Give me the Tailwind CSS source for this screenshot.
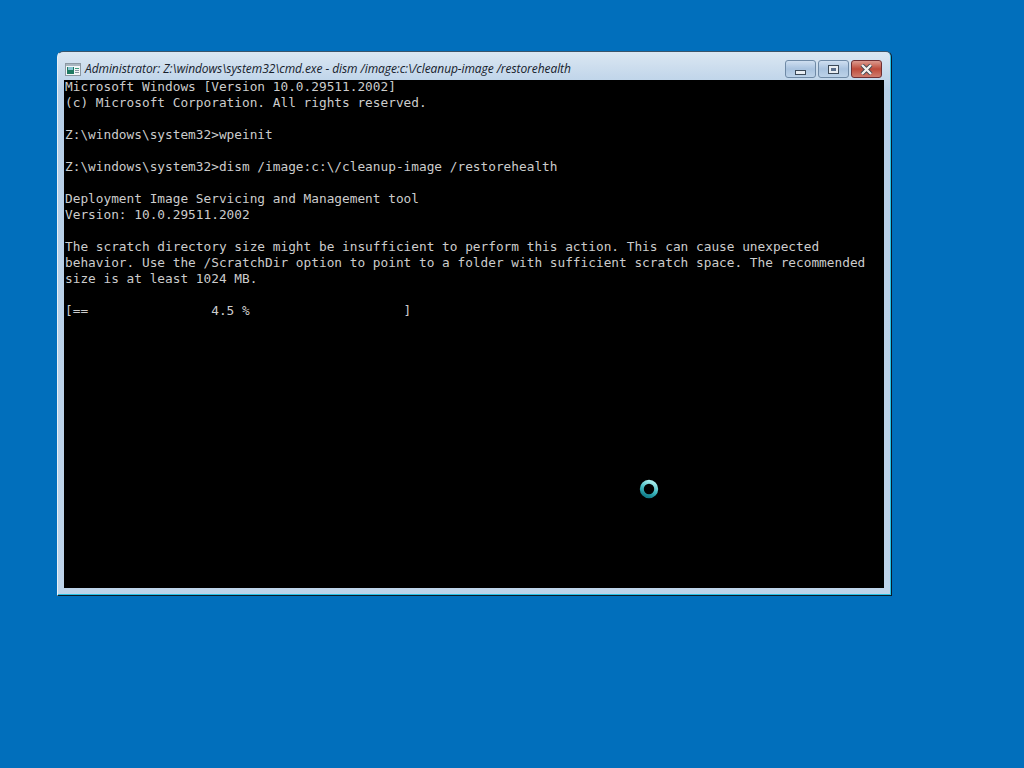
<html lang="en">
<head>
    <meta charset="UTF-8">
    <title>Administrator: cmd.exe</title>
    <script src="https://cdn.jsdelivr.net/npm/@tailwindcss/browser@4"></script>
</head>
<body class="bg-[#016fbc] w-[1024px] h-[768px] overflow-hidden">
    <div class="relative ml-[57px] mt-[51px] w-[835px] h-[545px] rounded-t-[6px] border border-[#0a1c2b] border-t-[#3a556b] border-l-[#e8f0f6] shadow-[inset_-1px_-1px_0_#29c1e6] bg-gradient-to-b from-[#dbe7f2] from-0% via-[#b7cfe7] via-[7%] to-[#bed4ea] flex flex-col">
        <div class="h-[28px] flex items-center pt-[6px] pl-[7px] pr-[6px] shrink-0">
            <svg class="w-[16px] h-[13px] shrink-0" viewBox="0 0 16 13">
                <rect x="0.5" y="0.5" width="15" height="12" fill="#f3f6f8" stroke="#8b98a3"/>
                <rect x="1" y="1" width="14" height="2" fill="#a9b6c0"/>
                <rect x="2" y="4" width="7" height="7" fill="#1f7a63"/>
                <rect x="3" y="4" width="5" height="3" fill="#86c4d2"/>
                <rect x="10" y="5" width="4" height="1" fill="#3f9c7c"/>
                <rect x="10" y="7" width="4" height="1" fill="#8a97a3"/>
                <rect x="10" y="9" width="4" height="1" fill="#8a97a3"/>
            </svg>
            <span class="ml-[4px] text-[12px] italic text-[#15202b] whitespace-nowrap font-['Open_Sans',sans-serif] tracking-[-0.07px]">Administrator: Z:\windows\system32\cmd.exe - dism /image:c:\/cleanup-image /restorehealth</span>
            <div class="ml-auto flex gap-[2px] mr-[3px]">
                <div class="w-[31px] h-[18px] rounded-[3px] border border-[#6f8aa6] bg-gradient-to-b from-[#cfdff0] via-[#a9c3df] to-[#bcd2e8] flex items-end justify-center pb-[2px]">
                    <div class="w-[11px] h-[5px] bg-[#e8edf2] border border-[#3c4a58]"></div>
                </div>
                <div class="w-[31px] h-[18px] rounded-[3px] border border-[#6f8aa6] bg-gradient-to-b from-[#cfdff0] via-[#a9c3df] to-[#bcd2e8] flex items-center justify-center">
                    <div class="w-[11px] h-[9px] border border-[#3c4a58] bg-[#e8edf2] flex items-center justify-center">
                        <div class="w-[5px] h-[3px] bg-[#5a6f8c]"></div>
                    </div>
                </div>
                <div class="w-[31px] h-[18px] rounded-[3px] border border-[#6e2f33] bg-gradient-to-b from-[#dc9a8e] via-[#bd4a3a] to-[#cf7c6e] flex items-center justify-center">
                    <svg class="w-[13px] h-[11px]" viewBox="0 0 13 11">
                        <path d="M2 1 L11 10 M11 1 L2 10" stroke="#3c4650" stroke-width="4"/>
                        <path d="M2 1 L11 10 M11 1 L2 10" stroke="#f4f1ee" stroke-width="2.4"/>
                    </svg>
                </div>
            </div>
        </div>
        <div class="mx-[6px] w-[820px] h-[508px] bg-black overflow-hidden">
            <pre class="-mt-[1px] text-[#cccccc] text-[12.79px] leading-[16px] pl-[1px] font-['DejaVu_Sans_Mono',monospace]">Microsoft Windows [Version 10.0.29511.2002]
(c) Microsoft Corporation. All rights reserved.

Z:\windows\system32>wpeinit

Z:\windows\system32>dism /image:c:\/cleanup-image /restorehealth

Deployment Image Servicing and Management tool
Version: 10.0.29511.2002

The scratch directory size might be insufficient to perform this action. This can cause unexpected
behavior. Use the /ScratchDir option to point to a folder with sufficient scratch space. The recommended
size is at least 1024 MB.

[==                4.5 %                    ]</pre>
        </div>
        <svg class="absolute left-[581px] top-[427px] w-[20px] h-[20px]" viewBox="0 0 20 20">
            <defs>
                <linearGradient id="ring" x1="0.7" y1="0" x2="0.3" y2="1">
                    <stop offset="0" stop-color="#a5ecec"/>
                    <stop offset="0.55" stop-color="#3fb8bf"/>
                    <stop offset="1" stop-color="#137f8c"/>
                </linearGradient>
            </defs>
            <circle cx="10" cy="10" r="7.2" fill="none" stroke="url(#ring)" stroke-width="4"/>
        </svg>
    </div>
</body>
</html>
